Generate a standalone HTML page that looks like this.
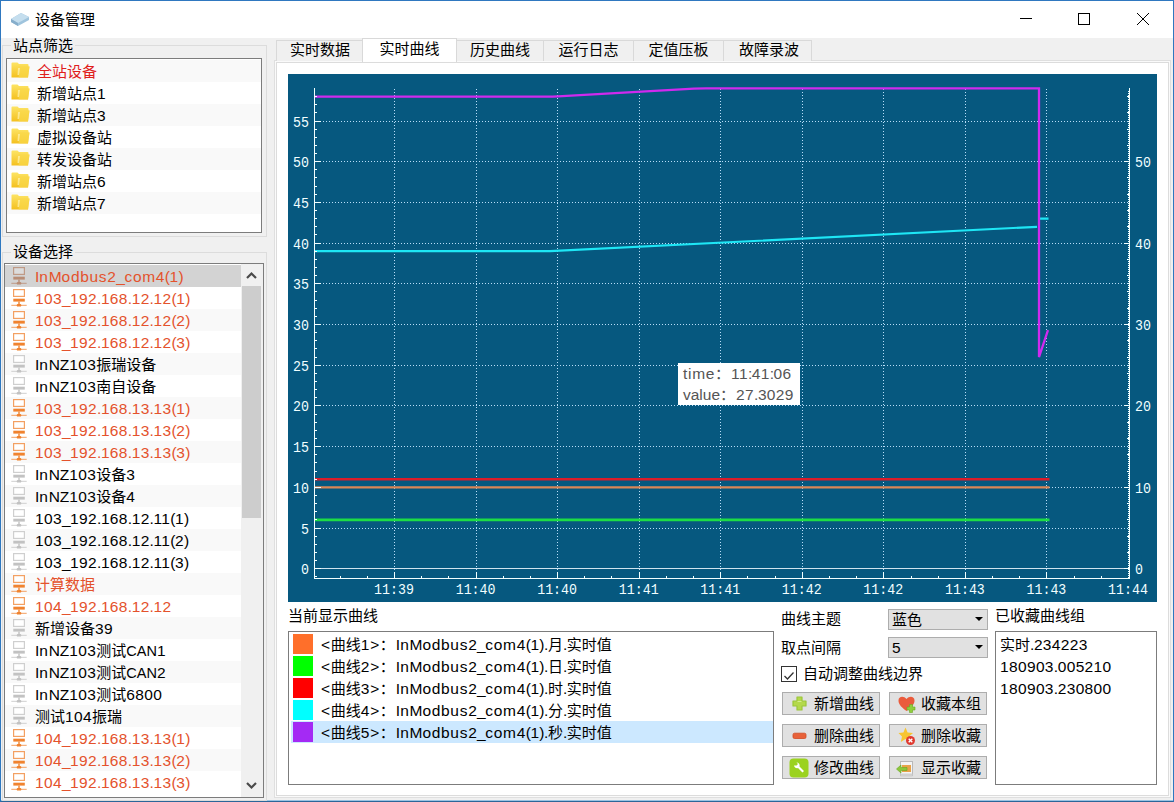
<!DOCTYPE html><html lang="zh"><head><meta charset="utf-8"><title>设备管理</title><style>
*{box-sizing:border-box;margin:0;padding:0}
html,body{width:1174px;height:802px;overflow:hidden;background:#f0f0f0}
body{font-family:"Liberation Sans","Noto Sans CJK SC",sans-serif;font-size:15px;color:#000;position:relative;line-height:22px}
.abs{position:absolute}
#win{position:absolute;left:0;top:0;width:1174px;height:802px;border:1px solid #2f78c0;border-bottom:1px solid #2c6699;background:#f0f0f0;box-shadow:inset 0 -1px 0 #9cc4e4}
#title{position:absolute;left:1px;top:1px;width:1172px;height:37px;background:#fff}
#title .t{position:absolute;left:34px;top:8px;line-height:22px;font-size:15px}
.glab{position:absolute;font-size:15px;line-height:16px;height:16px;background:#f0f0f0;padding:0 2px;white-space:nowrap}
.gbox{position:absolute;border:1px solid #dcdcdc}
.list{position:absolute;background:#fff;border:1px solid #7c7c7c;overflow:hidden}
.row{position:absolute;left:0;height:22px;line-height:22px;white-space:nowrap;font-size:15px}
.alt{background:#f9f9f9}
.sel{background:#d3d3d3}
.or{color:#e4522c}
.tab{position:absolute;top:40px;height:21px;border:1px solid #d9d9d9;border-bottom:none;background:#f0f0f0;text-align:center;line-height:18px;font-size:15px;white-space:nowrap}
.tab.on{top:38px;height:24px;background:#fff;line-height:20px;z-index:3}
#pane{position:absolute;left:274px;top:60px;width:897px;height:738px;border:1px solid #dfdfdf;background:#fafafa}
#pane i{position:absolute;left:1px;top:1px;width:893px;height:734px;border:1px solid #dcdcdc;background:#fff}
.btn{position:absolute;width:98px;height:23px;border:1px solid #adadad;background:#e1e1e1;font-size:15px;line-height:21px;white-space:nowrap}
.btn>span{position:absolute;left:31px;top:0}
.combo{position:absolute;left:888px;width:100px;height:21px;border:1px solid #adadad;background:#e1e1e1;font-size:15px;line-height:19px;padding-left:3px}
.combo:after{content:"";position:absolute;right:4px;top:7px;border:4px solid transparent;border-top:4px solid #000;border-bottom:none}
.l{font-size:15.5px;letter-spacing:.7px}
.c{font-size:15.5px}
.u{font-size:14.5px}
.n{font-size:15.5px;letter-spacing:.35px}
.p{font-size:15.5px;letter-spacing:-.45px}
.lab{position:absolute;font-size:15px;line-height:22px;white-space:nowrap}
</style></head><body>
<div id="win"></div>
<div id="title"><svg class="abs" style="left:8px;top:9px" width="22" height="18" viewBox="0 0 22 18"><path d="M2 9 L12 3 L20 7 L20 10 L9 16 L2 12 Z" fill="#9fc4dd"/><path d="M2 9 L12 3 L20 7 L9 13 Z" fill="#c5deee"/><path d="M2 9 L9 13 L9 16 L2 12 Z" fill="#86aecb"/></svg><div class="t">设备管理</div>
<svg class="abs" style="left:1010px;top:4px" width="150" height="28" viewBox="0 0 150 28"><g stroke="#000" stroke-width="1" fill="none"><path d="M9 13.5 H21"/><rect x="67.5" y="8.500" width="11" height="11"/><path d="M126 8 L138 20 M138 8 L126 20"/></g></svg>
</div>
<div class="gbox" style="left:2px;top:45px;width:265px;height:192px"></div>
<div class="glab" style="left:11px;top:38px">站点筛选</div>
<div class="list" style="left:6px;top:58px;width:256px;height:175px">
<div class="row alt" style="top:1px;width:254px"><svg class="abs" style="left:4px;top:2px" width="19" height="16" viewBox="0 0 19 16"><defs><linearGradient id="fg0" x1="0" y1="0" x2="0" y2="1"><stop offset="0" stop-color="#fde465"/><stop offset="1" stop-color="#f4c01f"/></linearGradient></defs><path d="M0.500 1.500 Q0.500 0.500 1.500 0.500 L6.500 0.500 L8 2 L16.500 2 Q17.500 2 17.500 3 L17.500 4.500 L18.500 4.500 L17 15.500 L0.500 15.500 Z" fill="url(#fg0)"/><path d="M8.500 4.500 L18.500 4.500 L17 15.500 L7.500 15.500 Z" fill="#f9d84a" opacity=".7"/><path d="M7 6 L9 6 L8 13 L6.500 13 Z" fill="#fff3b0" opacity=".7"/></svg><span class="abs" style="left:30px;top:1px;color:#e0201c">全站设备</span></div>
<div class="row" style="top:23px;width:254px"><svg class="abs" style="left:4px;top:2px" width="19" height="16" viewBox="0 0 19 16"><defs><linearGradient id="fg1" x1="0" y1="0" x2="0" y2="1"><stop offset="0" stop-color="#fde465"/><stop offset="1" stop-color="#f4c01f"/></linearGradient></defs><path d="M0.500 1.500 Q0.500 0.500 1.500 0.500 L6.500 0.500 L8 2 L16.500 2 Q17.500 2 17.500 3 L17.500 4.500 L18.500 4.500 L17 15.500 L0.500 15.500 Z" fill="url(#fg1)"/><path d="M8.500 4.500 L18.500 4.500 L17 15.500 L7.500 15.500 Z" fill="#f9d84a" opacity=".7"/><path d="M7 6 L9 6 L8 13 L6.500 13 Z" fill="#fff3b0" opacity=".7"/></svg><span class="abs" style="left:30px;top:1px">新增站点<span class="n">1</span></span></div>
<div class="row alt" style="top:45px;width:254px"><svg class="abs" style="left:4px;top:2px" width="19" height="16" viewBox="0 0 19 16"><defs><linearGradient id="fg2" x1="0" y1="0" x2="0" y2="1"><stop offset="0" stop-color="#fde465"/><stop offset="1" stop-color="#f4c01f"/></linearGradient></defs><path d="M0.500 1.500 Q0.500 0.500 1.500 0.500 L6.500 0.500 L8 2 L16.500 2 Q17.500 2 17.500 3 L17.500 4.500 L18.500 4.500 L17 15.500 L0.500 15.500 Z" fill="url(#fg2)"/><path d="M8.500 4.500 L18.500 4.500 L17 15.500 L7.500 15.500 Z" fill="#f9d84a" opacity=".7"/><path d="M7 6 L9 6 L8 13 L6.500 13 Z" fill="#fff3b0" opacity=".7"/></svg><span class="abs" style="left:30px;top:1px">新增站点<span class="n">3</span></span></div>
<div class="row" style="top:67px;width:254px"><svg class="abs" style="left:4px;top:2px" width="19" height="16" viewBox="0 0 19 16"><defs><linearGradient id="fg3" x1="0" y1="0" x2="0" y2="1"><stop offset="0" stop-color="#fde465"/><stop offset="1" stop-color="#f4c01f"/></linearGradient></defs><path d="M0.500 1.500 Q0.500 0.500 1.500 0.500 L6.500 0.500 L8 2 L16.500 2 Q17.500 2 17.500 3 L17.500 4.500 L18.500 4.500 L17 15.500 L0.500 15.500 Z" fill="url(#fg3)"/><path d="M8.500 4.500 L18.500 4.500 L17 15.500 L7.500 15.500 Z" fill="#f9d84a" opacity=".7"/><path d="M7 6 L9 6 L8 13 L6.500 13 Z" fill="#fff3b0" opacity=".7"/></svg><span class="abs" style="left:30px;top:1px">虚拟设备站</span></div>
<div class="row alt" style="top:89px;width:254px"><svg class="abs" style="left:4px;top:2px" width="19" height="16" viewBox="0 0 19 16"><defs><linearGradient id="fg4" x1="0" y1="0" x2="0" y2="1"><stop offset="0" stop-color="#fde465"/><stop offset="1" stop-color="#f4c01f"/></linearGradient></defs><path d="M0.500 1.500 Q0.500 0.500 1.500 0.500 L6.500 0.500 L8 2 L16.500 2 Q17.500 2 17.500 3 L17.500 4.500 L18.500 4.500 L17 15.500 L0.500 15.500 Z" fill="url(#fg4)"/><path d="M8.500 4.500 L18.500 4.500 L17 15.500 L7.500 15.500 Z" fill="#f9d84a" opacity=".7"/><path d="M7 6 L9 6 L8 13 L6.500 13 Z" fill="#fff3b0" opacity=".7"/></svg><span class="abs" style="left:30px;top:1px">转发设备站</span></div>
<div class="row" style="top:111px;width:254px"><svg class="abs" style="left:4px;top:2px" width="19" height="16" viewBox="0 0 19 16"><defs><linearGradient id="fg5" x1="0" y1="0" x2="0" y2="1"><stop offset="0" stop-color="#fde465"/><stop offset="1" stop-color="#f4c01f"/></linearGradient></defs><path d="M0.500 1.500 Q0.500 0.500 1.500 0.500 L6.500 0.500 L8 2 L16.500 2 Q17.500 2 17.500 3 L17.500 4.500 L18.500 4.500 L17 15.500 L0.500 15.500 Z" fill="url(#fg5)"/><path d="M8.500 4.500 L18.500 4.500 L17 15.500 L7.500 15.500 Z" fill="#f9d84a" opacity=".7"/><path d="M7 6 L9 6 L8 13 L6.500 13 Z" fill="#fff3b0" opacity=".7"/></svg><span class="abs" style="left:30px;top:1px">新增站点<span class="n">6</span></span></div>
<div class="row alt" style="top:133px;width:254px"><svg class="abs" style="left:4px;top:2px" width="19" height="16" viewBox="0 0 19 16"><defs><linearGradient id="fg6" x1="0" y1="0" x2="0" y2="1"><stop offset="0" stop-color="#fde465"/><stop offset="1" stop-color="#f4c01f"/></linearGradient></defs><path d="M0.500 1.500 Q0.500 0.500 1.500 0.500 L6.500 0.500 L8 2 L16.500 2 Q17.500 2 17.500 3 L17.500 4.500 L18.500 4.500 L17 15.500 L0.500 15.500 Z" fill="url(#fg6)"/><path d="M8.500 4.500 L18.500 4.500 L17 15.500 L7.500 15.500 Z" fill="#f9d84a" opacity=".7"/><path d="M7 6 L9 6 L8 13 L6.500 13 Z" fill="#fff3b0" opacity=".7"/></svg><span class="abs" style="left:30px;top:1px">新增站点<span class="n">7</span></span></div>
</div>
<div class="gbox" style="left:2px;top:252px;width:265px;height:549px"></div>
<div class="glab" style="left:11px;top:244px">设备选择</div>
<div class="list" style="left:4px;top:263px;width:260px;height:535px">
<div class="row sel" style="top:1px;width:236px"><svg class="abs" style="left:6px;top:2px" width="17" height="19" viewBox="0 0 17 19"><rect x="2.600" y="0.600" width="10.800" height="6.800" fill="#dcdcdc" stroke="#bf9a86" stroke-width="1.200"/><rect x="2.300" y="9.700" width="11.500" height="2.900" fill="#b88d76"/><rect x="7.300" y="12.600" width="1.400" height="3.500" fill="#b88d76"/><rect x="0.300" y="15.800" width="15.400" height="1" fill="#bf9a86"/><rect x="5.700" y="15" width="4.600" height="2.600" rx="1.200" fill="#b88d76"/></svg><span class="abs or" style="left:30px;top:1px"><span class="c">I</span><span class="l">n</span><span class="c">M</span><span class="l">odbus</span><span class="n">2</span><span class="p">_</span><span class="l">com</span><span class="n">4</span><span class="p">(</span><span class="n">1</span><span class="p">)</span></span></div>
<div class="row" style="top:23px;width:236px"><svg class="abs" style="left:6px;top:2px" width="17" height="19" viewBox="0 0 17 19"><rect x="2.600" y="0.600" width="10.800" height="6.800" fill="#fff" stroke="#f3a062" stroke-width="1.200"/><rect x="2.300" y="9.700" width="11.500" height="2.900" fill="#f0832f"/><rect x="7.300" y="12.600" width="1.400" height="3.500" fill="#f0832f"/><rect x="0.300" y="15.800" width="15.400" height="1" fill="#f3a062"/><rect x="5.700" y="15" width="4.600" height="2.600" rx="1.200" fill="#f0832f"/></svg><span class="abs or" style="left:30px;top:1px"><span class="n">103</span><span class="p">_</span><span class="n">192</span><span class="p">.</span><span class="n">168</span><span class="p">.</span><span class="n">12</span><span class="p">.</span><span class="n">12</span><span class="p">(</span><span class="n">1</span><span class="p">)</span></span></div>
<div class="row alt" style="top:45px;width:236px"><svg class="abs" style="left:6px;top:2px" width="17" height="19" viewBox="0 0 17 19"><rect x="2.600" y="0.600" width="10.800" height="6.800" fill="#fff" stroke="#f3a062" stroke-width="1.200"/><rect x="2.300" y="9.700" width="11.500" height="2.900" fill="#f0832f"/><rect x="7.300" y="12.600" width="1.400" height="3.500" fill="#f0832f"/><rect x="0.300" y="15.800" width="15.400" height="1" fill="#f3a062"/><rect x="5.700" y="15" width="4.600" height="2.600" rx="1.200" fill="#f0832f"/></svg><span class="abs or" style="left:30px;top:1px"><span class="n">103</span><span class="p">_</span><span class="n">192</span><span class="p">.</span><span class="n">168</span><span class="p">.</span><span class="n">12</span><span class="p">.</span><span class="n">12</span><span class="p">(</span><span class="n">2</span><span class="p">)</span></span></div>
<div class="row" style="top:67px;width:236px"><svg class="abs" style="left:6px;top:2px" width="17" height="19" viewBox="0 0 17 19"><rect x="2.600" y="0.600" width="10.800" height="6.800" fill="#fff" stroke="#f3a062" stroke-width="1.200"/><rect x="2.300" y="9.700" width="11.500" height="2.900" fill="#f0832f"/><rect x="7.300" y="12.600" width="1.400" height="3.500" fill="#f0832f"/><rect x="0.300" y="15.800" width="15.400" height="1" fill="#f3a062"/><rect x="5.700" y="15" width="4.600" height="2.600" rx="1.200" fill="#f0832f"/></svg><span class="abs or" style="left:30px;top:1px"><span class="n">103</span><span class="p">_</span><span class="n">192</span><span class="p">.</span><span class="n">168</span><span class="p">.</span><span class="n">12</span><span class="p">.</span><span class="n">12</span><span class="p">(</span><span class="n">3</span><span class="p">)</span></span></div>
<div class="row alt" style="top:89px;width:236px"><svg class="abs" style="left:6px;top:2px" width="17" height="19" viewBox="0 0 17 19"><rect x="2.600" y="0.600" width="10.800" height="6.800" fill="#fff" stroke="#cfcfcf" stroke-width="1.200"/><rect x="2.300" y="9.700" width="11.500" height="2.900" fill="#c2c2c2"/><rect x="7.300" y="12.600" width="1.400" height="3.500" fill="#c2c2c2"/><rect x="0.300" y="15.800" width="15.400" height="1" fill="#cfcfcf"/><rect x="5.700" y="15" width="4.600" height="2.600" rx="1.200" fill="#c2c2c2"/></svg><span class="abs" style="left:30px;top:1px"><span class="c">I</span><span class="l">n</span><span class="c">NZ</span><span class="n">103</span>振瑞设备</span></div>
<div class="row" style="top:111px;width:236px"><svg class="abs" style="left:6px;top:2px" width="17" height="19" viewBox="0 0 17 19"><rect x="2.600" y="0.600" width="10.800" height="6.800" fill="#fff" stroke="#cfcfcf" stroke-width="1.200"/><rect x="2.300" y="9.700" width="11.500" height="2.900" fill="#c2c2c2"/><rect x="7.300" y="12.600" width="1.400" height="3.500" fill="#c2c2c2"/><rect x="0.300" y="15.800" width="15.400" height="1" fill="#cfcfcf"/><rect x="5.700" y="15" width="4.600" height="2.600" rx="1.200" fill="#c2c2c2"/></svg><span class="abs" style="left:30px;top:1px"><span class="c">I</span><span class="l">n</span><span class="c">NZ</span><span class="n">103</span>南自设备</span></div>
<div class="row alt" style="top:133px;width:236px"><svg class="abs" style="left:6px;top:2px" width="17" height="19" viewBox="0 0 17 19"><rect x="2.600" y="0.600" width="10.800" height="6.800" fill="#fff" stroke="#f3a062" stroke-width="1.200"/><rect x="2.300" y="9.700" width="11.500" height="2.900" fill="#f0832f"/><rect x="7.300" y="12.600" width="1.400" height="3.500" fill="#f0832f"/><rect x="0.300" y="15.800" width="15.400" height="1" fill="#f3a062"/><rect x="5.700" y="15" width="4.600" height="2.600" rx="1.200" fill="#f0832f"/></svg><span class="abs or" style="left:30px;top:1px"><span class="n">103</span><span class="p">_</span><span class="n">192</span><span class="p">.</span><span class="n">168</span><span class="p">.</span><span class="n">13</span><span class="p">.</span><span class="n">13</span><span class="p">(</span><span class="n">1</span><span class="p">)</span></span></div>
<div class="row" style="top:155px;width:236px"><svg class="abs" style="left:6px;top:2px" width="17" height="19" viewBox="0 0 17 19"><rect x="2.600" y="0.600" width="10.800" height="6.800" fill="#fff" stroke="#f3a062" stroke-width="1.200"/><rect x="2.300" y="9.700" width="11.500" height="2.900" fill="#f0832f"/><rect x="7.300" y="12.600" width="1.400" height="3.500" fill="#f0832f"/><rect x="0.300" y="15.800" width="15.400" height="1" fill="#f3a062"/><rect x="5.700" y="15" width="4.600" height="2.600" rx="1.200" fill="#f0832f"/></svg><span class="abs or" style="left:30px;top:1px"><span class="n">103</span><span class="p">_</span><span class="n">192</span><span class="p">.</span><span class="n">168</span><span class="p">.</span><span class="n">13</span><span class="p">.</span><span class="n">13</span><span class="p">(</span><span class="n">2</span><span class="p">)</span></span></div>
<div class="row alt" style="top:177px;width:236px"><svg class="abs" style="left:6px;top:2px" width="17" height="19" viewBox="0 0 17 19"><rect x="2.600" y="0.600" width="10.800" height="6.800" fill="#fff" stroke="#f3a062" stroke-width="1.200"/><rect x="2.300" y="9.700" width="11.500" height="2.900" fill="#f0832f"/><rect x="7.300" y="12.600" width="1.400" height="3.500" fill="#f0832f"/><rect x="0.300" y="15.800" width="15.400" height="1" fill="#f3a062"/><rect x="5.700" y="15" width="4.600" height="2.600" rx="1.200" fill="#f0832f"/></svg><span class="abs or" style="left:30px;top:1px"><span class="n">103</span><span class="p">_</span><span class="n">192</span><span class="p">.</span><span class="n">168</span><span class="p">.</span><span class="n">13</span><span class="p">.</span><span class="n">13</span><span class="p">(</span><span class="n">3</span><span class="p">)</span></span></div>
<div class="row" style="top:199px;width:236px"><svg class="abs" style="left:6px;top:2px" width="17" height="19" viewBox="0 0 17 19"><rect x="2.600" y="0.600" width="10.800" height="6.800" fill="#fff" stroke="#cfcfcf" stroke-width="1.200"/><rect x="2.300" y="9.700" width="11.500" height="2.900" fill="#c2c2c2"/><rect x="7.300" y="12.600" width="1.400" height="3.500" fill="#c2c2c2"/><rect x="0.300" y="15.800" width="15.400" height="1" fill="#cfcfcf"/><rect x="5.700" y="15" width="4.600" height="2.600" rx="1.200" fill="#c2c2c2"/></svg><span class="abs" style="left:30px;top:1px"><span class="c">I</span><span class="l">n</span><span class="c">NZ</span><span class="n">103</span>设备<span class="n">3</span></span></div>
<div class="row alt" style="top:221px;width:236px"><svg class="abs" style="left:6px;top:2px" width="17" height="19" viewBox="0 0 17 19"><rect x="2.600" y="0.600" width="10.800" height="6.800" fill="#fff" stroke="#cfcfcf" stroke-width="1.200"/><rect x="2.300" y="9.700" width="11.500" height="2.900" fill="#c2c2c2"/><rect x="7.300" y="12.600" width="1.400" height="3.500" fill="#c2c2c2"/><rect x="0.300" y="15.800" width="15.400" height="1" fill="#cfcfcf"/><rect x="5.700" y="15" width="4.600" height="2.600" rx="1.200" fill="#c2c2c2"/></svg><span class="abs" style="left:30px;top:1px"><span class="c">I</span><span class="l">n</span><span class="c">NZ</span><span class="n">103</span>设备<span class="n">4</span></span></div>
<div class="row" style="top:243px;width:236px"><svg class="abs" style="left:6px;top:2px" width="17" height="19" viewBox="0 0 17 19"><rect x="2.600" y="0.600" width="10.800" height="6.800" fill="#fff" stroke="#cfcfcf" stroke-width="1.200"/><rect x="2.300" y="9.700" width="11.500" height="2.900" fill="#c2c2c2"/><rect x="7.300" y="12.600" width="1.400" height="3.500" fill="#c2c2c2"/><rect x="0.300" y="15.800" width="15.400" height="1" fill="#cfcfcf"/><rect x="5.700" y="15" width="4.600" height="2.600" rx="1.200" fill="#c2c2c2"/></svg><span class="abs" style="left:30px;top:1px"><span class="n">103</span><span class="p">_</span><span class="n">192</span><span class="p">.</span><span class="n">168</span><span class="p">.</span><span class="n">12</span><span class="p">.</span><span class="n">11</span><span class="p">(</span><span class="n">1</span><span class="p">)</span></span></div>
<div class="row alt" style="top:265px;width:236px"><svg class="abs" style="left:6px;top:2px" width="17" height="19" viewBox="0 0 17 19"><rect x="2.600" y="0.600" width="10.800" height="6.800" fill="#fff" stroke="#cfcfcf" stroke-width="1.200"/><rect x="2.300" y="9.700" width="11.500" height="2.900" fill="#c2c2c2"/><rect x="7.300" y="12.600" width="1.400" height="3.500" fill="#c2c2c2"/><rect x="0.300" y="15.800" width="15.400" height="1" fill="#cfcfcf"/><rect x="5.700" y="15" width="4.600" height="2.600" rx="1.200" fill="#c2c2c2"/></svg><span class="abs" style="left:30px;top:1px"><span class="n">103</span><span class="p">_</span><span class="n">192</span><span class="p">.</span><span class="n">168</span><span class="p">.</span><span class="n">12</span><span class="p">.</span><span class="n">11</span><span class="p">(</span><span class="n">2</span><span class="p">)</span></span></div>
<div class="row" style="top:287px;width:236px"><svg class="abs" style="left:6px;top:2px" width="17" height="19" viewBox="0 0 17 19"><rect x="2.600" y="0.600" width="10.800" height="6.800" fill="#fff" stroke="#cfcfcf" stroke-width="1.200"/><rect x="2.300" y="9.700" width="11.500" height="2.900" fill="#c2c2c2"/><rect x="7.300" y="12.600" width="1.400" height="3.500" fill="#c2c2c2"/><rect x="0.300" y="15.800" width="15.400" height="1" fill="#cfcfcf"/><rect x="5.700" y="15" width="4.600" height="2.600" rx="1.200" fill="#c2c2c2"/></svg><span class="abs" style="left:30px;top:1px"><span class="n">103</span><span class="p">_</span><span class="n">192</span><span class="p">.</span><span class="n">168</span><span class="p">.</span><span class="n">12</span><span class="p">.</span><span class="n">11</span><span class="p">(</span><span class="n">3</span><span class="p">)</span></span></div>
<div class="row alt" style="top:309px;width:236px"><svg class="abs" style="left:6px;top:2px" width="17" height="19" viewBox="0 0 17 19"><rect x="2.600" y="0.600" width="10.800" height="6.800" fill="#fff" stroke="#f3a062" stroke-width="1.200"/><rect x="2.300" y="9.700" width="11.500" height="2.900" fill="#f0832f"/><rect x="7.300" y="12.600" width="1.400" height="3.500" fill="#f0832f"/><rect x="0.300" y="15.800" width="15.400" height="1" fill="#f3a062"/><rect x="5.700" y="15" width="4.600" height="2.600" rx="1.200" fill="#f0832f"/></svg><span class="abs or" style="left:30px;top:1px">计算数据</span></div>
<div class="row" style="top:331px;width:236px"><svg class="abs" style="left:6px;top:2px" width="17" height="19" viewBox="0 0 17 19"><rect x="2.600" y="0.600" width="10.800" height="6.800" fill="#fff" stroke="#f3a062" stroke-width="1.200"/><rect x="2.300" y="9.700" width="11.500" height="2.900" fill="#f0832f"/><rect x="7.300" y="12.600" width="1.400" height="3.500" fill="#f0832f"/><rect x="0.300" y="15.800" width="15.400" height="1" fill="#f3a062"/><rect x="5.700" y="15" width="4.600" height="2.600" rx="1.200" fill="#f0832f"/></svg><span class="abs or" style="left:30px;top:1px"><span class="n">104</span><span class="p">_</span><span class="n">192</span><span class="p">.</span><span class="n">168</span><span class="p">.</span><span class="n">12</span><span class="p">.</span><span class="n">12</span></span></div>
<div class="row alt" style="top:353px;width:236px"><svg class="abs" style="left:6px;top:2px" width="17" height="19" viewBox="0 0 17 19"><rect x="2.600" y="0.600" width="10.800" height="6.800" fill="#fff" stroke="#cfcfcf" stroke-width="1.200"/><rect x="2.300" y="9.700" width="11.500" height="2.900" fill="#c2c2c2"/><rect x="7.300" y="12.600" width="1.400" height="3.500" fill="#c2c2c2"/><rect x="0.300" y="15.800" width="15.400" height="1" fill="#cfcfcf"/><rect x="5.700" y="15" width="4.600" height="2.600" rx="1.200" fill="#c2c2c2"/></svg><span class="abs" style="left:30px;top:1px">新增设备<span class="n">39</span></span></div>
<div class="row" style="top:375px;width:236px"><svg class="abs" style="left:6px;top:2px" width="17" height="19" viewBox="0 0 17 19"><rect x="2.600" y="0.600" width="10.800" height="6.800" fill="#fff" stroke="#cfcfcf" stroke-width="1.200"/><rect x="2.300" y="9.700" width="11.500" height="2.900" fill="#c2c2c2"/><rect x="7.300" y="12.600" width="1.400" height="3.500" fill="#c2c2c2"/><rect x="0.300" y="15.800" width="15.400" height="1" fill="#cfcfcf"/><rect x="5.700" y="15" width="4.600" height="2.600" rx="1.200" fill="#c2c2c2"/></svg><span class="abs" style="left:30px;top:1px"><span class="c">I</span><span class="l">n</span><span class="c">NZ</span><span class="n">103</span>测试<span class="u">CAN</span><span class="n">1</span></span></div>
<div class="row alt" style="top:397px;width:236px"><svg class="abs" style="left:6px;top:2px" width="17" height="19" viewBox="0 0 17 19"><rect x="2.600" y="0.600" width="10.800" height="6.800" fill="#fff" stroke="#cfcfcf" stroke-width="1.200"/><rect x="2.300" y="9.700" width="11.500" height="2.900" fill="#c2c2c2"/><rect x="7.300" y="12.600" width="1.400" height="3.500" fill="#c2c2c2"/><rect x="0.300" y="15.800" width="15.400" height="1" fill="#cfcfcf"/><rect x="5.700" y="15" width="4.600" height="2.600" rx="1.200" fill="#c2c2c2"/></svg><span class="abs" style="left:30px;top:1px"><span class="c">I</span><span class="l">n</span><span class="c">NZ</span><span class="n">103</span>测试<span class="u">CAN</span><span class="n">2</span></span></div>
<div class="row" style="top:419px;width:236px"><svg class="abs" style="left:6px;top:2px" width="17" height="19" viewBox="0 0 17 19"><rect x="2.600" y="0.600" width="10.800" height="6.800" fill="#fff" stroke="#cfcfcf" stroke-width="1.200"/><rect x="2.300" y="9.700" width="11.500" height="2.900" fill="#c2c2c2"/><rect x="7.300" y="12.600" width="1.400" height="3.500" fill="#c2c2c2"/><rect x="0.300" y="15.800" width="15.400" height="1" fill="#cfcfcf"/><rect x="5.700" y="15" width="4.600" height="2.600" rx="1.200" fill="#c2c2c2"/></svg><span class="abs" style="left:30px;top:1px"><span class="c">I</span><span class="l">n</span><span class="c">NZ</span><span class="n">103</span>测试<span class="n">6800</span></span></div>
<div class="row alt" style="top:441px;width:236px"><svg class="abs" style="left:6px;top:2px" width="17" height="19" viewBox="0 0 17 19"><rect x="2.600" y="0.600" width="10.800" height="6.800" fill="#fff" stroke="#cfcfcf" stroke-width="1.200"/><rect x="2.300" y="9.700" width="11.500" height="2.900" fill="#c2c2c2"/><rect x="7.300" y="12.600" width="1.400" height="3.500" fill="#c2c2c2"/><rect x="0.300" y="15.800" width="15.400" height="1" fill="#cfcfcf"/><rect x="5.700" y="15" width="4.600" height="2.600" rx="1.200" fill="#c2c2c2"/></svg><span class="abs" style="left:30px;top:1px">测试<span class="n">104</span>振瑞</span></div>
<div class="row" style="top:463px;width:236px"><svg class="abs" style="left:6px;top:2px" width="17" height="19" viewBox="0 0 17 19"><rect x="2.600" y="0.600" width="10.800" height="6.800" fill="#fff" stroke="#f3a062" stroke-width="1.200"/><rect x="2.300" y="9.700" width="11.500" height="2.900" fill="#f0832f"/><rect x="7.300" y="12.600" width="1.400" height="3.500" fill="#f0832f"/><rect x="0.300" y="15.800" width="15.400" height="1" fill="#f3a062"/><rect x="5.700" y="15" width="4.600" height="2.600" rx="1.200" fill="#f0832f"/></svg><span class="abs or" style="left:30px;top:1px"><span class="n">104</span><span class="p">_</span><span class="n">192</span><span class="p">.</span><span class="n">168</span><span class="p">.</span><span class="n">13</span><span class="p">.</span><span class="n">13</span><span class="p">(</span><span class="n">1</span><span class="p">)</span></span></div>
<div class="row alt" style="top:485px;width:236px"><svg class="abs" style="left:6px;top:2px" width="17" height="19" viewBox="0 0 17 19"><rect x="2.600" y="0.600" width="10.800" height="6.800" fill="#fff" stroke="#f3a062" stroke-width="1.200"/><rect x="2.300" y="9.700" width="11.500" height="2.900" fill="#f0832f"/><rect x="7.300" y="12.600" width="1.400" height="3.500" fill="#f0832f"/><rect x="0.300" y="15.800" width="15.400" height="1" fill="#f3a062"/><rect x="5.700" y="15" width="4.600" height="2.600" rx="1.200" fill="#f0832f"/></svg><span class="abs or" style="left:30px;top:1px"><span class="n">104</span><span class="p">_</span><span class="n">192</span><span class="p">.</span><span class="n">168</span><span class="p">.</span><span class="n">13</span><span class="p">.</span><span class="n">13</span><span class="p">(</span><span class="n">2</span><span class="p">)</span></span></div>
<div class="row" style="top:507px;width:236px"><svg class="abs" style="left:6px;top:2px" width="17" height="19" viewBox="0 0 17 19"><rect x="2.600" y="0.600" width="10.800" height="6.800" fill="#fff" stroke="#f3a062" stroke-width="1.200"/><rect x="2.300" y="9.700" width="11.500" height="2.900" fill="#f0832f"/><rect x="7.300" y="12.600" width="1.400" height="3.500" fill="#f0832f"/><rect x="0.300" y="15.800" width="15.400" height="1" fill="#f3a062"/><rect x="5.700" y="15" width="4.600" height="2.600" rx="1.200" fill="#f0832f"/></svg><span class="abs or" style="left:30px;top:1px"><span class="n">104</span><span class="p">_</span><span class="n">192</span><span class="p">.</span><span class="n">168</span><span class="p">.</span><span class="n">13</span><span class="p">.</span><span class="n">13</span><span class="p">(</span><span class="n">3</span><span class="p">)</span></span></div>
<div class="abs" style="left:236px;top:0;width:22px;height:533px;background:#f0f0f0"></div>
<div class="abs" style="left:237px;top:22px;width:19px;height:232px;background:#cdcdcd"></div>
<svg class="abs" style="left:236px;top:0" width="22" height="533" viewBox="0 0 22 533"><g fill="none" stroke="#4a4a4a" stroke-width="2.200"><path d="M6 14 L10.500 9.500 L15 14"/><path d="M6 519 L10.500 523.500 L15 519"/></g></svg>
</div>
<div id="pane"><i></i></div>
<div class="tab" style="left:276px;width:88px">实时数据</div>
<div class="tab on" style="left:362px;width:95px">实时曲线</div>
<div class="tab" style="left:456px;width:88px">历史曲线</div>
<div class="tab" style="left:543px;width:91px">运行日志</div>
<div class="tab" style="left:633px;width:91px">定值压板</div>
<div class="tab" style="left:723px;width:89px;padding-left:3px">故障录波</div>
<svg class="abs" style="left:288px;top:74px" width="869" height="528" viewBox="288 74 869 528">
<rect x="288" y="74" width="869" height="528" fill="#06587f"/>
<path d="M323 528.5 H1129 M323 487.5 H1129 M323 446.5 H1129 M323 405.5 H1129 M323 365.5 H1129 M323 324.5 H1129 M323 283.5 H1129 M323 243.5 H1129 M323 202.5 H1129 M323 161.5 H1129 M323 121.5 H1129" stroke="#b8ddf8" stroke-width="1" stroke-dasharray="1 2" fill="none" shape-rendering="crispEdges"/>
<path d="M394.5 89 V572 M476.5 89 V572 M557.5 89 V572 M639.5 89 V572 M720.5 89 V572 M802.5 89 V572 M883.5 89 V572 M965.5 89 V572 M1046.5 89 V572" stroke="#b8ddf8" stroke-width="1" stroke-dasharray="1 2" fill="none" shape-rendering="crispEdges"/>
<path d="M321 568.5 H1124" stroke="#cfe3ee" stroke-width="1" shape-rendering="crispEdges"/>
<path d="M315 487.3 H1049.500" stroke="#dc8656" stroke-width="2.200" fill="none"/>
<path d="M315 479.2 H1049.500" stroke="#d91d2a" stroke-width="2.600" fill="none"/>
<path d="M315 519.9 H1049.500" stroke="#1ddc46" stroke-width="2.600" fill="none"/>
<path d="M315 251.2 H550 L1037 226.8 M1039 218.7 H1048.500" stroke="#1ee6f5" stroke-width="2.200" fill="none"/>
<path d="M315 96.6 H548 Q552 96.6 558 96.3 L694 88.7 Q700 88.4 706 88.4 H1039 V357.1 L1048 330.2" stroke="#cf2aee" stroke-width="2.300" fill="none" stroke-linejoin="miter"/>
<path d="M314.5 88 V579 M314 578.5 H1130 M1129.5 88 V579 M315 576.5 h2 M315 568.5 h6 M315 560.5 h2 M315 552.5 h2 M315 544.5 h2 M315 536.5 h2 M315 528.5 h6 M315 519.5 h2 M315 511.5 h2 M315 503.5 h2 M315 495.5 h2 M315 487.5 h6 M315 479.5 h2 M315 471.5 h2 M315 462.5 h2 M315 454.5 h2 M315 446.5 h6 M315 438.5 h2 M315 430.5 h2 M315 422.5 h2 M315 414.5 h2 M315 405.5 h6 M315 397.5 h2 M315 389.5 h2 M315 381.5 h2 M315 373.5 h2 M315 365.5 h6 M315 357.5 h2 M315 348.5 h2 M315 340.5 h2 M315 332.5 h2 M315 324.5 h6 M315 316.5 h2 M315 308.5 h2 M315 300.5 h2 M315 291.5 h2 M315 283.5 h6 M315 275.5 h2 M315 267.5 h2 M315 259.5 h2 M315 251.5 h2 M315 243.5 h6 M315 234.5 h2 M315 226.5 h2 M315 218.5 h2 M315 210.5 h2 M315 202.5 h6 M315 194.5 h2 M315 186.5 h2 M315 177.5 h2 M315 169.5 h2 M315 161.5 h6 M315 153.5 h2 M315 145.5 h2 M315 137.5 h2 M315 129.5 h2 M315 121.5 h6 M315 112.5 h2 M315 104.5 h2 M315 96.5 h2 M1129 568.5 h-5 M1129 552.5 h-2 M1129 536.5 h-2 M1129 519.5 h-2 M1129 503.5 h-2 M1129 487.5 h-5 M1129 471.5 h-2 M1129 454.5 h-2 M1129 438.5 h-2 M1129 422.5 h-2 M1129 405.5 h-5 M1129 389.5 h-2 M1129 373.5 h-2 M1129 357.5 h-2 M1129 340.5 h-2 M1129 324.5 h-5 M1129 308.5 h-2 M1129 291.5 h-2 M1129 275.5 h-2 M1129 259.5 h-2 M1129 243.5 h-5 M1129 226.5 h-2 M1129 210.5 h-2 M1129 194.5 h-2 M1129 177.5 h-2 M1129 161.5 h-5 M1129 145.5 h-2 M1129 129.5 h-2 M1129 112.5 h-2 M1129 96.5 h-2 M340.5 578 v-2 M367.5 578 v-2 M394.5 578 v-6 M421.5 578 v-2 M448.5 578 v-2 M476.5 578 v-6 M503.5 578 v-2 M530.5 578 v-2 M557.5 578 v-6 M584.5 578 v-2 M611.5 578 v-2 M639.5 578 v-6 M666.5 578 v-2 M693.5 578 v-2 M720.5 578 v-6 M747.5 578 v-2 M775.5 578 v-2 M802.5 578 v-6 M829.5 578 v-2 M856.5 578 v-2 M883.5 578 v-6 M911.5 578 v-2 M938.5 578 v-2 M965.5 578 v-6 M992.5 578 v-2 M1019.5 578 v-2 M1046.5 578 v-6 M1074.5 578 v-2 M1101.5 578 v-2" stroke="#f2ffff" stroke-width="1" fill="none" shape-rendering="crispEdges"/>
<path d="M1128.5 91 V578" stroke="#f2ffff" stroke-width="1" stroke-dasharray="1 1" fill="none" shape-rendering="crispEdges"/>
<g font-family='"Liberation Mono",monospace' font-size="13.300" fill="#f2ffff">
<text transform="translate(309 574) scale(1 1.14)" text-anchor="end">0</text>
<text transform="translate(309 534) scale(1 1.14)" text-anchor="end">5</text>
<text transform="translate(309 493) scale(1 1.14)" text-anchor="end">10</text>
<text transform="translate(309 452) scale(1 1.14)" text-anchor="end">15</text>
<text transform="translate(309 411) scale(1 1.14)" text-anchor="end">20</text>
<text transform="translate(309 371) scale(1 1.14)" text-anchor="end">25</text>
<text transform="translate(309 330) scale(1 1.14)" text-anchor="end">30</text>
<text transform="translate(309 289) scale(1 1.14)" text-anchor="end">35</text>
<text transform="translate(309 249) scale(1 1.14)" text-anchor="end">40</text>
<text transform="translate(309 208) scale(1 1.14)" text-anchor="end">45</text>
<text transform="translate(309 167) scale(1 1.14)" text-anchor="end">50</text>
<text transform="translate(309 127) scale(1 1.14)" text-anchor="end">55</text>
<text transform="translate(1135 574) scale(1 1.14)" text-anchor="start">0</text>
<text transform="translate(1135 493) scale(1 1.14)" text-anchor="start">10</text>
<text transform="translate(1135 411) scale(1 1.14)" text-anchor="start">20</text>
<text transform="translate(1135 330) scale(1 1.14)" text-anchor="start">30</text>
<text transform="translate(1135 249) scale(1 1.14)" text-anchor="start">40</text>
<text transform="translate(1135 167) scale(1 1.14)" text-anchor="start">50</text>
<text transform="translate(394.0 594) scale(1 1.14)" text-anchor="middle">11:39</text>
<text transform="translate(475.6 594) scale(1 1.14)" text-anchor="middle">11:40</text>
<text transform="translate(557.1 594) scale(1 1.14)" text-anchor="middle">11:40</text>
<text transform="translate(638.7 594) scale(1 1.14)" text-anchor="middle">11:41</text>
<text transform="translate(720.2 594) scale(1 1.14)" text-anchor="middle">11:41</text>
<text transform="translate(801.8 594) scale(1 1.14)" text-anchor="middle">11:42</text>
<text transform="translate(883.3 594) scale(1 1.14)" text-anchor="middle">11:42</text>
<text transform="translate(964.9 594) scale(1 1.14)" text-anchor="middle">11:43</text>
<text transform="translate(1046.4 594) scale(1 1.14)" text-anchor="middle">11:43</text>
<text transform="translate(1128.0 594) scale(1 1.14)" text-anchor="middle">11:44</text>
</g>
</svg>
<div class="abs" style="left:678px;top:363px;width:122px;height:42px;background:#fff;color:#555;font-size:15px;line-height:21px;padding:0 0 0 5px;white-space:nowrap"><div><span class="l">time</span>：<span style="margin-left:1px"><span class="n">11</span><span class="p">:</span><span class="n">41</span><span class="p">:</span><span class="n">06</span></span></div><div><span style="font-size:15.5px">value</span>：<span style="margin-left:1px"><span class="n">27</span><span class="p">.</span><span class="n">3029</span></span></div></div>
<div class="lab" style="left:288px;top:605px">当前显示曲线</div>
<div class="list" style="left:288px;top:631px;width:486px;height:154px">
<div class="row" style="top:1px;left:2px;width:482px"><div class="abs" style="left:2px;top:1px;width:20px;height:20px;background:#ff6f2a"></div><span class="abs" style="left:30px;top:1px"><span class="p" style="letter-spacing:.6px">&lt;</span>曲线<span class="n">1</span><span class="p" style="letter-spacing:.6px;margin-left:.5px">&gt;</span>：<span style="margin-left:1px"><span class="c">I</span><span class="l">n</span><span class="c">M</span><span class="l">odbus</span><span class="n">2</span><span class="p">_</span><span class="l">com</span><span class="n">4</span><span class="p">(</span><span class="n">1</span><span class="p">).</span>月<span class="p">.</span>实时值</span></span></div>
<div class="row" style="top:23px;left:2px;width:482px"><div class="abs" style="left:2px;top:1px;width:20px;height:20px;background:#00ff00"></div><span class="abs" style="left:30px;top:1px"><span class="p" style="letter-spacing:.6px">&lt;</span>曲线<span class="n">2</span><span class="p" style="letter-spacing:.6px;margin-left:.5px">&gt;</span>：<span style="margin-left:1px"><span class="c">I</span><span class="l">n</span><span class="c">M</span><span class="l">odbus</span><span class="n">2</span><span class="p">_</span><span class="l">com</span><span class="n">4</span><span class="p">(</span><span class="n">1</span><span class="p">).</span>日<span class="p">.</span>实时值</span></span></div>
<div class="row" style="top:45px;left:2px;width:482px"><div class="abs" style="left:2px;top:1px;width:20px;height:20px;background:#ff0000"></div><span class="abs" style="left:30px;top:1px"><span class="p" style="letter-spacing:.6px">&lt;</span>曲线<span class="n">3</span><span class="p" style="letter-spacing:.6px;margin-left:.5px">&gt;</span>：<span style="margin-left:1px"><span class="c">I</span><span class="l">n</span><span class="c">M</span><span class="l">odbus</span><span class="n">2</span><span class="p">_</span><span class="l">com</span><span class="n">4</span><span class="p">(</span><span class="n">1</span><span class="p">).</span>时<span class="p">.</span>实时值</span></span></div>
<div class="row" style="top:67px;left:2px;width:482px"><div class="abs" style="left:2px;top:1px;width:20px;height:20px;background:#00ffff"></div><span class="abs" style="left:30px;top:1px"><span class="p" style="letter-spacing:.6px">&lt;</span>曲线<span class="n">4</span><span class="p" style="letter-spacing:.6px;margin-left:.5px">&gt;</span>：<span style="margin-left:1px"><span class="c">I</span><span class="l">n</span><span class="c">M</span><span class="l">odbus</span><span class="n">2</span><span class="p">_</span><span class="l">com</span><span class="n">4</span><span class="p">(</span><span class="n">1</span><span class="p">).</span>分<span class="p">.</span>实时值</span></span></div>
<div class="row" style="top:89px;left:2px;width:482px;background:#cce8ff"><div class="abs" style="left:2px;top:1px;width:20px;height:20px;background:#a42af4"></div><span class="abs" style="left:30px;top:1px"><span class="p" style="letter-spacing:.6px">&lt;</span>曲线<span class="n">5</span><span class="p" style="letter-spacing:.6px;margin-left:.5px">&gt;</span>：<span style="margin-left:1px"><span class="c">I</span><span class="l">n</span><span class="c">M</span><span class="l">odbus</span><span class="n">2</span><span class="p">_</span><span class="l">com</span><span class="n">4</span><span class="p">(</span><span class="n">1</span><span class="p">).</span>秒<span class="p">.</span>实时值</span></span></div>
</div>
<div class="lab" style="left:781px;top:608px">曲线主题</div>
<div class="combo" style="top:609px">蓝色</div>
<div class="lab" style="left:781px;top:637px">取点间隔</div>
<div class="combo" style="top:637px"><span class="n">5</span></div>
<div class="abs" style="left:781px;top:666px;width:16px;height:16px;border:1px solid #333;background:#fff"><svg width="14" height="14" viewBox="0 0 14 14"><path d="M2.500 7 L5.500 10 L11.500 3.500" fill="none" stroke="#333" stroke-width="1.300"/></svg></div>
<div class="lab" style="left:803px;top:663px">自动调整曲线边界</div>
<div class="btn" style="left:782px;top:692px"><svg class="abs" style="left:9px;top:3px" width="15" height="15" viewBox="0 0 15 15"><path d="M5 1 H10 V5 H14 V10 H10 V14 H5 V10 H1 V5 H5 Z" fill="#b4d94a" stroke="#9cc63a" stroke-width="1.200" stroke-linejoin="round"/><path d="M5.500 5.500 H9.500" stroke="#d6ec8e" stroke-width="1"/></svg><span>新增曲线</span></div>
<div class="btn" style="left:889px;top:692px"><svg class="abs" style="left:8px;top:2px" width="19" height="19" viewBox="0 0 19 19"><path d="M8.500 16 C1.500 11 0.500 8 0.500 5.500 C0.500 1.500 5.500 0.500 8.500 4 C11.500 0.500 16.500 1.500 16.500 5.500 C16.500 8 15.500 11 8.500 16 Z" fill="#ea5b3c"/><path d="M11.500 9.500 H14.500 V12 H17 V15 H14.500 V17.500 H11.500 V15 H9 V12 H11.500 Z" fill="#8fcf3c" stroke="#6aa820" stroke-width=".6"/></svg><span>收藏本组</span></div>
<div class="btn" style="left:782px;top:724px"><svg class="abs" style="left:9px;top:3px" width="15" height="15" viewBox="0 0 15 15"><rect x="1" y="5.200" width="13" height="5.300" rx="1.500" fill="#e8623a" stroke="#d04a22" stroke-width=".8"/></svg><span>删除曲线</span></div>
<div class="btn" style="left:889px;top:724px"><svg class="abs" style="left:8px;top:2px" width="19" height="19" viewBox="0 0 19 19"><path d="M7.500 0.500 L9.600 5.500 L15 6 L11 9.500 L12.200 15 L7.500 12 L2.800 15 L4 9.500 L0.500 6 L5.400 5.500 Z" fill="#f7c531"/><circle cx="12.500" cy="13.500" r="4.500" fill="#e0392f"/><path d="M10.700 11.700 L14.300 15.300 M14.300 11.700 L10.700 15.300" stroke="#fff" stroke-width="1.400"/></svg><span>删除收藏</span></div>
<div class="btn" style="left:782px;top:756px"><svg class="abs" style="left:6px;top:1px" width="20" height="20" viewBox="0 0 20 20"><rect x="0.500" y="0.500" width="19" height="19" rx="4" fill="#9bd21f"/><path d="M5 7.500 a3 3 0 0 0 4 2.500 L13.500 14.500 L15 13 L10.500 8.500 a3 3 0 0 0 -3 -4 L9 6 L7.500 7.500 Z" fill="#fff"/></svg><span>修改曲线</span></div>
<div class="btn" style="left:889px;top:756px"><svg class="abs" style="left:6px;top:3px" width="19" height="18" viewBox="0 0 19 18"><rect x="4.500" y="1.500" width="12" height="14" fill="#f4f4f4" stroke="#b8b8b8"/><rect x="6" y="5" width="9" height="7" fill="#e8a24a"/><rect x="4.500" y="13.500" width="12" height="3" fill="#d0d0d0"/><path d="M0.500 9 L5 5 V7.500 H11 V10.500 H5 V13 Z" fill="#8cc63c" stroke="#6aa820" stroke-width=".6"/></svg><span>显示收藏</span></div>
<div class="lab" style="left:995px;top:605px">已收藏曲线组</div>
<div class="list" style="left:995px;top:631px;width:162px;height:154px">
<div class="row" style="top:2px;left:4px">实时<span class="p">.</span><span class="n">234223</span></div>
<div class="row" style="top:24px;left:4px"><span class="n">180903</span><span class="p">.</span><span class="n">005210</span></div>
<div class="row" style="top:46px;left:4px"><span class="n">180903</span><span class="p">.</span><span class="n">230800</span></div>
</div>
</body></html>
